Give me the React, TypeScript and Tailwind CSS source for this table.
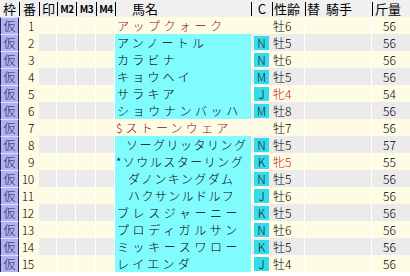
import React from "react";

type Row = {
  no: number;
  name: string;
  c?: string;
  sex: string;
  kin: number;
  red?: boolean;
  unreg?: boolean;
  pl: number;
  ls: number;
};

const rows: Row[] = [
  { no: 1, name: "アップクォーク", sex: "牡6", kin: 56, unreg: true, pl: 2, ls: 3.5 },
  { no: 2, name: "アンノートル", c: "N", sex: "牡5", kin: 56, pl: 2, ls: 3.2 },
  { no: 3, name: "カラビナ", c: "N", sex: "牡6", kin: 56, pl: 2, ls: 3.2 },
  { no: 4, name: "キョウヘイ", c: "M", sex: "牡5", kin: 56, pl: 2, ls: 3.2 },
  { no: 5, name: "サラキア", c: "J", sex: "牝4", kin: 54, red: true, pl: 2, ls: 3.2 },
  { no: 6, name: "ショウナンバッハ", c: "M", sex: "牡8", kin: 56, pl: 2, ls: 3.6 },
  { no: 7, name: "$ストーンウェア", sex: "牡7", kin: 56, unreg: true, pl: 1, ls: 3.2 },
  { no: 8, name: "ソーグリッタリング", c: "N", sex: "牡5", kin: 57, pl: 11, ls: 1.5 },
  { no: 9, name: "*ソウルスターリング", c: "K", sex: "牝5", kin: 55, red: true, pl: 1, ls: 1.5 },
  { no: 10, name: "ダノンキングダム", c: "N", sex: "牡5", kin: 56, pl: 13, ls: 1.4 },
  { no: 11, name: "ハクサンルドルフ", c: "J", sex: "牡6", kin: 56, pl: 13, ls: 1.4 },
  { no: 12, name: "ブレスジャーニー", c: "K", sex: "牡5", kin: 56, pl: 2, ls: 3.6 },
  { no: 13, name: "プロディガルサン", c: "N", sex: "牡6", kin: 56, pl: 2, ls: 3.6 },
  { no: 14, name: "ミッキースワロー", c: "K", sex: "牡5", kin: 56, pl: 2, ls: 3.6 },
  { no: 15, name: "レイエンダ", c: "J", sex: "牡4", kin: 56, pl: 2, ls: 3.2 },
];

const cols = "grid grid-cols-[19px_20px_18px_19px_20px_19px_136px_21px_33px_67px_38px]";

function Header() {
  const sep = "mt-[2px] h-[14px] border-l border-black leading-[14px]";
  return (
    <div className={`${cols} h-[17px] bg-[#f0f0f0] text-[13px] text-black`}>
      <div className="h-[17px] text-center leading-[17px]">枠</div>
      <div className={`${sep} text-center`}>番</div>
      <div className={`${sep} text-center`}>印</div>
      <div className={`${sep} text-center text-[10px] font-bold tracking-tighter`}>M2</div>
      <div className={`${sep} text-center text-[10px] font-bold tracking-tighter`}>M3</div>
      <div className={`${sep} text-center text-[10px] font-bold tracking-tighter`}>M4</div>
      <div className={`${sep} pl-[16px]`}>馬名</div>
      <div className={`${sep} text-center`}>C</div>
      <div className={`${sep} pl-[1px]`}>性齢</div>
      <div className={`${sep} flex gap-[6px] pl-[1px]`}>
        <span>替</span>
        <span>騎手</span>
      </div>
      <div className={`${sep} pl-[2px]`}>斤量</div>
    </div>
  );
}

function DataRow({ r }: { r: Row }) {
  const bg = r.no % 2 === 0 ? "bg-[#ebebeb]" : "bg-[#fffce6]";
  const cell = `${bg} border-r border-white h-[17px]`;
  return (
    <div className={`${cols} h-[17px] text-[12px] font-light leading-[17px] text-black`}>
      <div className="h-[17px] border-x border-[#20205a] border-t border-t-[#dcdcff] bg-[#b2b2f0] text-center leading-[16px] text-[#1a1a50]">
        仮
      </div>
      <div className="h-[17px] overflow-hidden bg-[#fffce6] pr-[5px] text-right tracking-tight">
        {r.no}
      </div>
      <div className={cell} />
      <div className={cell} />
      <div className={cell} />
      <div className={cell} />
      <div
        className={`h-[17px] whitespace-nowrap ${r.unreg ? "bg-[#fffce6] text-[#8a1010]" : "bg-[#80fcff]"}`}
        style={{ paddingLeft: r.pl, letterSpacing: r.ls }}
      >
        {r.name}
      </div>
      <div className={`${bg} flex h-[17px] items-center pl-[3px]`}>
        {r.c && (
          <div className="h-[14px] w-[15px] bg-[#34dbea] text-center leading-[14px] text-[#101830]">
            {r.c}
          </div>
        )}
      </div>
      <div className={`${cell} pl-[1px] ${r.red ? "text-[#d01010]" : ""}`}>{r.sex}</div>
      <div className={cell} />
      <div className={`${bg} h-[17px] pl-[11px]`}>{r.kin}</div>
    </div>
  );
}

export default function App() {
  return (
    <div
      className="h-[276px] w-[410px] overflow-hidden bg-white"
      style={{ fontFamily: '"Noto Sans CJK JP", "Noto Sans", sans-serif' }}
    >
      <Header />
      {rows.map((r) => (
        <DataRow key={r.no} r={r} />
      ))}
    </div>
  );
}
